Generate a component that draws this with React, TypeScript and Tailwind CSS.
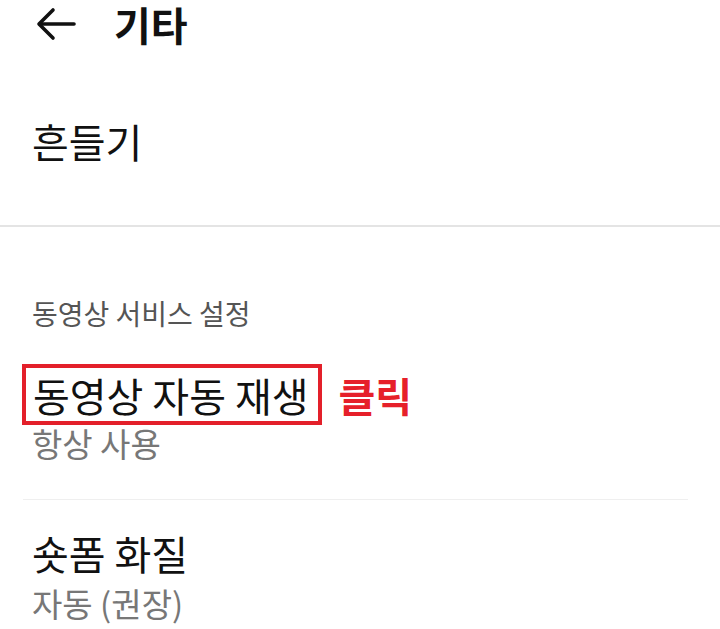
import React from "react";

const font = { fontFamily: '"Noto Sans CJK KR", "Noto Sans", sans-serif' };

export default function App() {
  return (
    <div className="w-[720px] h-[629px] bg-white overflow-hidden text-[#111]" style={font}>
      <div className="flex items-center h-[48px] pl-[36px]">
        <svg width="40" height="34" viewBox="0 0 40 34" fill="none" stroke="#111" strokeWidth="3.6" strokeLinecap="round" strokeLinejoin="round">
          <path d="M38 17H4" />
          <path d="M17 3L3 17l14 14" />
        </svg>
        <span className="ml-[38px] text-[40px] leading-[48px] font-bold">기타</span>
      </div>
      <div className="h-[177px] flex items-center pl-[32px] pt-[8px]">
        <span className="text-[40px] leading-none">흔들기</span>
      </div>
      <div className="h-[2px] bg-[#e4e4e4]" />
      <div className="pl-[32px] pt-[72px]">
        <div className="text-[28px] leading-none text-[#555]">동영상 서비스 설정</div>
      </div>
      <div className="pl-[22px] pt-[37px] flex items-center">
        <div className="border-[4px] border-[#e3202a] pl-[7px] pr-[9px] h-[61px] flex items-center">
          <span className="text-[40px] leading-none">동영상 자동 재생</span>
        </div>
        <span className="ml-[17px] text-[40px] leading-none font-bold text-[#e6202a]">클릭</span>
      </div>
      <div className="pl-[32px] pt-[2px] text-[33px] leading-none text-[#777]">항상 사용</div>
      <div className="ml-[23px] mt-[39px] w-[665px] h-[1px] bg-[#efefef]" />
      <div className="pl-[32px] pt-[33px] text-[40px] leading-none">숏폼 화질</div>
      <div className="pl-[32px] pt-[14px] text-[33px] leading-none text-[#777]">자동 (권장)</div>
    </div>
  );
}
